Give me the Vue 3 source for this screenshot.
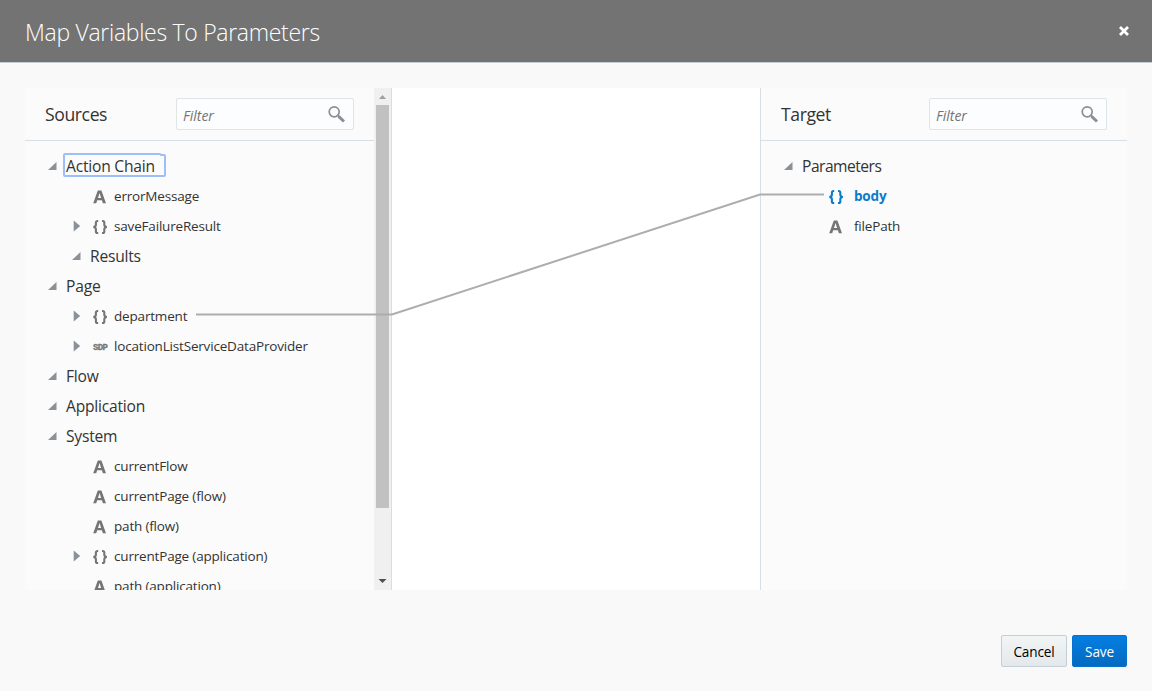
<script setup>
const sources = [
  { label: 'Action Chain', kind: 'group', level: 0, arrow: 'open', focused: true },
  { label: 'errorMessage', kind: 'string', level: 1 },
  { label: 'saveFailureResult', kind: 'object', level: 1, arrow: 'closed' },
  { label: 'Results', kind: 'group', level: 1, arrow: 'open' },
  { label: 'Page', kind: 'group', level: 0, arrow: 'open' },
  { label: 'department', kind: 'object', level: 1, arrow: 'closed' },
  { label: 'locationListServiceDataProvider', kind: 'sdp', level: 1, arrow: 'closed' },
  { label: 'Flow', kind: 'group', level: 0, arrow: 'open' },
  { label: 'Application', kind: 'group', level: 0, arrow: 'open' },
  { label: 'System', kind: 'group', level: 0, arrow: 'open' },
  { label: 'currentFlow', kind: 'string', level: 1 },
  { label: 'currentPage (flow)', kind: 'string', level: 1 },
  { label: 'path (flow)', kind: 'string', level: 1 },
  { label: 'currentPage (application)', kind: 'object', level: 1, arrow: 'closed' },
  { label: 'path (application)', kind: 'string', level: 1 },
]
const targets = [
  { label: 'Parameters', kind: 'group', level: 0, arrow: 'open' },
  { label: 'body', kind: 'object', level: 1, mapped: true },
  { label: 'filePath', kind: 'string', level: 1 },
]
const panels = [
  { id: 'sources', title: 'Sources', rows: sources },
  { id: 'target', title: 'Target', rows: targets },
]
</script>

<template>
  <div class="dialog">
    <header class="titlebar">
      <h1>Map Variables To Parameters</h1>
      <button class="close" aria-label="Close">
        <svg width="12" height="12" viewBox="0 0 12 12"><path d="M2 2L10 10M10 2L2 10" /></svg>
      </button>
    </header>

    <main class="mapper">
      <section v-for="p in panels" :key="p.id" class="panel" :class="p.id">
        <div class="content">
          <div class="panel-head">
            <h2>{{ p.title }}</h2>
            <label class="filter">
              <input type="text" placeholder="Filter" />
              <svg width="18" height="18" viewBox="0 0 18 18">
                <circle cx="6.2" cy="6.8" r="5" />
                <path class="neck" d="M9.6 10.1L11.3 11.7" />
                <path class="handle" d="M10.6 11.3L16 16.5" />
              </svg>
            </label>
          </div>
          <ul class="tree">
            <li v-for="row in p.rows" :key="row.label" :class="['l' + row.level, row.kind, { mapped: row.mapped }]">
              <span class="arrow">
                <svg v-if="row.arrow === 'open'" width="10" height="10" viewBox="0 0 10 10"><path d="M8.5 1V9H0Z" /></svg>
                <svg v-else-if="row.arrow === 'closed'" width="10" height="12" viewBox="0 0 10 12"><path d="M1.7 .5L8.2 6L1.7 11.5Z" /></svg>
              </span>
              <span v-if="row.kind !== 'group'" class="icon">
                <svg v-if="row.kind === 'string'" width="14" height="14" viewBox="0 0 14 14">
                  <path class="fill" fill-rule="evenodd" d="M4.8 .5H8.4L13 13.3H9.9L8.9 10.3H4.2L3.2 13.3H.2ZM6.6 3.1L5 7.9H8.1Z" />
                </svg>
                <svg v-else-if="row.kind === 'object'" width="16" height="14" viewBox="0 0 16 14">
                  <path class="brace" d="M5.2 1H4.6Q2.9 1 2.9 2.6V4.8Q2.9 6.7 .4 7Q2.9 7.3 2.9 9.2V11.4Q2.9 13 4.6 13H5.2" />
                  <path class="brace" d="M9 1H9.6Q11.3 1 11.3 2.6V4.8Q11.3 6.7 13.8 7Q11.3 7.3 11.3 9.2V11.4Q11.3 13 9.6 13H9" />
                </svg>
                <span v-else class="sdp-mark">SDP</span>
              </span>
              <span class="label">{{ row.label }}
                <svg v-if="row.focused" class="ring" width="104" height="26" viewBox="0 0 104 26">
                  <path d="M2.5 2H97L98 3H101Q102 3 102 4V23Q102 24 101 24H2Q1 24 1 23V3Q1 2 2 2Z" />
                </svg>
              </span>
            </li>
          </ul>
        </div>
        <div v-if="p.id === 'sources'" class="scrollbar">
          <svg class="step" width="17" height="17" viewBox="0 0 17 17"><path d="M5 11L8.5 7L12 11Z" fill="#a0a0a0" /></svg>
          <div class="thumb"></div>
          <svg class="step" width="17" height="17" viewBox="0 0 17 17"><path d="M4.5 6H12.5L8.5 10Z" fill="#505050" /></svg>
        </div>
      </section>
      <svg class="links" width="1102" height="502" viewBox="0 0 1102 502">
        <path d="M171 226.5H367L735 106.5H799" />
      </svg>
    </main>

    <footer class="actions">
      <button class="btn">Cancel</button>
      <button class="btn primary">Save</button>
    </footer>
  </div>
</template>

<style>
body { margin: 0; background: #f9f9f9; }
</style>

<style scoped>
* { box-sizing: border-box; }
.dialog {
  width: 100%; height: 691px; overflow: hidden; background: #f9f9f9; color: #333;
  font-family: "Open Sans", "Noto Sans", sans-serif; display: flex; flex-direction: column;
}
.titlebar {
  height: 63px; flex: none; background: #737373; border-bottom: 1px solid #c4ced7;
  display: flex; align-items: center; justify-content: space-between; padding: 2px 22px 0 25px;
}
h1 { margin: 0; color: #fff; font-size: 23px; font-weight: 300; line-height: 32px; letter-spacing: -.3px; white-space: nowrap; }
.close { border: 0; background: none; padding: 0 0 2px; display: flex; }
.close path { stroke: #fff; stroke-width: 2.8; fill: none; }
.mapper {
  position: relative; flex: none; height: 502px; margin: 25px 25px 0; background: #fff;
  display: flex; justify-content: space-between;
}
.panel { display: flex; width: 367px; background: #fbfbfb; overflow: hidden; }
.sources { border-right: 1px solid #d6dfe6; }
.target { border-left: 1px solid #d6dfe6; }
.content { flex: 1; min-width: 0; }
.panel-head {
  height: 53px; border-bottom: 1px solid #d6dfe6; padding: 0 20px;
  display: flex; align-items: center; justify-content: space-between;
}
h2 { margin: 0; font-size: 17.6px; font-weight: 400; line-height: 26px; letter-spacing: -.4px; }
.filter {
  width: 178px; height: 32px; border: 1px solid #dfe4e7; border-radius: 2px; background: #fcfdfe;
  display: flex; align-items: center; padding: 0 7px 0 6px;
}
.filter input {
  flex: 1; min-width: 0; border: 0; padding: 3px 0 0; background: none; outline: 0;
  font: italic 14px "Open Sans", sans-serif; letter-spacing: 0;
}
.filter input::placeholder { color: #737373; opacity: 1; }
.filter svg { fill: none; stroke: #8b8f93; stroke-width: 1.7; }
.filter .neck { stroke-width: 1.5; }
.filter .handle { stroke-width: 3; }
.tree { list-style: none; margin: 0; padding: 10px 0 0 22px; }
.tree li { height: 30px; display: flex; align-items: center; white-space: nowrap; font-size: 13.5px; letter-spacing: -.18px; }
.tree li.l1 { padding-left: 24px; }
.tree li.group { font-size: 15.6px; letter-spacing: -.21px; }
.target .tree li.group { letter-spacing: -.5px; }
.arrow { width: 19px; flex: none; display: flex; padding-left: 1px; }
.arrow path { fill: #8b9196; }
.icon { width: 24px; flex: none; display: flex; padding: 1px 0 0 3px; color: #757575; }
.target .icon { width: 28px; padding-left: 3px; }
.fill { fill: currentColor; }
.brace { fill: none; stroke: currentColor; stroke-width: 2.1; }
.icon svg { overflow: visible; }
.sdp-mark { font: bold 9px/12px "Liberation Mono", monospace; letter-spacing: -.6px; padding-top: 2px; -webkit-text-stroke: .3px currentColor; }
.label { position: relative; line-height: 20px; }
.group .label { padding-bottom: 1px; }
.ring { position: absolute; left: -3px; top: -4px; fill: none; stroke: #9dbef8; stroke-width: 2; }
.mapped .icon, .mapped .label { color: #0a7cca; }
.mapped .label { font-weight: 700; }
.scrollbar { width: 17px; flex: none; background: #f0f0f0; display: flex; flex-direction: column; }
.step { flex: none; }
.scrollbar .thumb { height: 403px; width: 13px; margin: 0 2px 65px; background: #c1c1c1; flex: none; }
.links { position: absolute; left: 0; top: 0; fill: none; stroke: #adadad; stroke-width: 2; pointer-events: none; }
.actions { display: flex; justify-content: flex-end; gap: 5px; padding: 45px 25px 0; }
.btn {
  height: 32px; width: 66px; border: 1px solid #c4ced7; border-radius: 2px; padding: 1px 0 0;
  background: linear-gradient(#f3f5f6, #e4e8ea); color: #000;
  font: 13.6px "Open Sans", sans-serif; letter-spacing: -.15px;
}
.btn.primary { width: 55px; color: #fff; border-color: #0572ce; background: linear-gradient(#057ee3, #046abf); }
</style>
